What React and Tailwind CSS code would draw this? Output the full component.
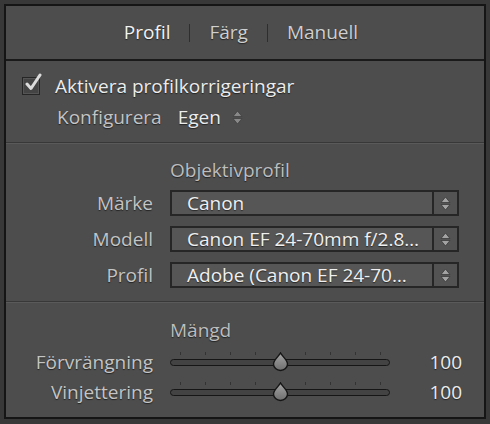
import React from 'react'

const shadow = '[text-shadow:0_1px_1px_rgba(0,0,0,0.55)]'
const txt = 'text-[19px] leading-none'

function Tabs() {
  return (
    <div className={`h-[53px] flex items-center justify-center pr-[8px] ${txt} ${shadow}`}>
      <span className="text-[#f2f2f2]">Profil</span>
      <span className="mx-[19px] w-px h-[18px] bg-[#2e2e2e]" />
      <span className="text-[#cfcfcf]">Färg</span>
      <span className="mx-[19px] w-px h-[18px] bg-[#2e2e2e]" />
      <span className="text-[#cfcfcf]">Manuell</span>
    </div>
  )
}

function Divider() {
  return (
    <div className="flex flex-col">
      <div className="h-px bg-[#383838]" />
      <div className="h-px bg-[#5a5a5a]" />
    </div>
  )
}

function Checkbox() {
  return (
    <div className="relative w-[18px] h-[18px] border border-[#262626] bg-[#444] shadow-[inset_0_0_0_1px_#555]">
      <svg className="absolute -top-[5px] left-[1px]" width="20" height="20" viewBox="0 0 20 20">
        <path d="M3 11 L7 15.5 L16 2" fill="none" stroke="#dcdcdc" strokeWidth="3" strokeLinecap="round" strokeLinejoin="round" />
      </svg>
    </div>
  )
}

function UpDown({ className = '' }) {
  return (
    <svg width="11" height="15" viewBox="0 0 11 15" className={className}>
      <path d="M5.5 1 L10 6.5 L1 6.5 Z" fill="#a2a2a2" stroke="#3a3a3a" strokeWidth="0.8" />
      <path d="M5.5 14 L10 8.5 L1 8.5 Z" fill="#a2a2a2" stroke="#3a3a3a" strokeWidth="0.8" />
    </svg>
  )
}

function Select({ value }) {
  return (
    <div className="flex h-[26px] w-[289px]">
      <div className={`flex-1 flex items-center pl-[15px] border-2 border-[#262626] bg-[#565656] ${txt} text-[#f0f0f0] ${shadow} whitespace-nowrap overflow-hidden`}>
        {value}
      </div>
      <div className="w-[25px] flex items-center justify-center border-2 border-l-0 border-[#262626] bg-[#535353]">
        <UpDown />
      </div>
    </div>
  )
}

function Slider() {
  const ticks = [0, 1, 2, 3, 4, 5, 6, 7, 8]
  return (
    <div className="relative w-[220px] h-[30px]">
      {ticks.map((t) => (
        <div key={t} className="absolute top-[5px] w-px h-[3px] bg-[#333]" style={{ left: 10 + t * 25 }} />
      ))}
      <div className="absolute top-[12px] left-0 w-[220px] h-[7px] rounded-full border border-[#161616] bg-[#434343]" />
      <svg className="absolute top-[5px] left-[102px]" width="17" height="20" viewBox="0 0 17 20">
        <defs>
          <linearGradient id="thumb" x1="0" y1="0" x2="0" y2="1">
            <stop offset="0" stopColor="#a6a6a6" />
            <stop offset="1" stopColor="#6e6e6e" />
          </linearGradient>
        </defs>
        <path d="M8.5 1 C10 4 15.5 8 15.5 12 A7 6.5 0 0 1 1.5 12 C1.5 8 7 4 8.5 1 Z" fill="url(#thumb)" stroke="#151515" strokeWidth="1.4" />
      </svg>
    </div>
  )
}

export default function App() {
  const label = `w-[147px] text-right ${txt} text-[#c4c4c4] ${shadow}`
  return (
    <div className="w-[490px] h-[424px] bg-[#383838] pt-[4px] px-[4px] pb-[5px] font-['Open_Sans','Noto_Sans',sans-serif]">
      <div className="h-full border-2 border-[#151515] bg-[#4d4d4d] flex flex-col">
        <Tabs />
        <div className="h-[2px] bg-[#1a1a1a]" />

        {/* Aktivera */}
        <div className="h-[81px] pt-[13px] flex flex-col">
          <div className="h-[24px] flex items-center pl-[16px]">
            <Checkbox />
            <span className={`ml-[15px] ${txt} text-[#ececec] ${shadow}`}>Aktivera profilkorrigeringar</span>
          </div>
          <div className="mt-[7px] h-[24px] flex items-center pl-[51px]">
            <span className={`${txt} text-[#c4c4c4] ${shadow}`}>Konfigurera</span>
            <span className={`ml-[16px] ${txt} text-[#ececec] ${shadow}`}>Egen</span>
            <UpDown className="ml-[11px] opacity-70" />
          </div>
        </div>
        <Divider />

        {/* Objektivprofil */}
        <div className="h-[157px] pt-[16px] flex flex-col">
          <div className={`h-[20px] flex items-center pl-[164px] ${txt} text-[#bdbdbd] ${shadow}`}>Objektivprofil</div>
          <div className="mt-[10px] flex flex-col gap-[10px]">
            {[
              ['Märke', 'Canon'],
              ['Modell', 'Canon EF 24-70mm f/2.8…'],
              ['Profil', 'Adobe (Canon EF 24-70…'],
            ].map(([l, v]) => (
              <div key={l} className="flex items-center gap-[17px]">
                <span className={label}>{l}</span>
                <Select value={v} />
              </div>
            ))}
          </div>
        </div>
        <Divider />

        {/* Mängd */}
        <div className="flex-1 pt-[17px] flex flex-col">
          <div className={`h-[20px] flex items-center pl-[164px] ${txt} text-[#bdbdbd] ${shadow}`}>Mängd</div>
          <div className="mt-[7px] flex flex-col">
            {['Förvrängning', 'Vinjettering'].map((l) => (
              <div key={l} className="h-[30px] flex items-center gap-[17px]">
                <span className={label}>{l}</span>
                <Slider />
                <span className={`w-[55px] text-right ${txt} text-[#ececec] ${shadow}`}>100</span>
              </div>
            ))}
          </div>
        </div>
      </div>
    </div>
  )
}
